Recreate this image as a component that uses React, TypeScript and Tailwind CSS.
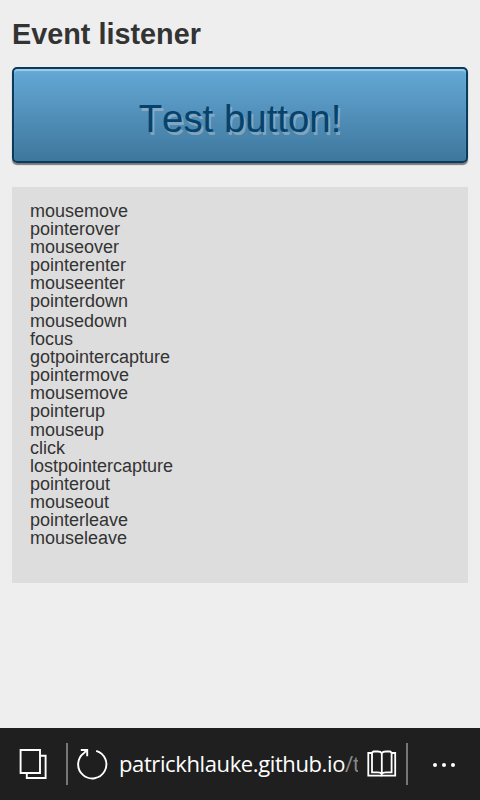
const groups = [
  ['mousemove', 'pointerover', 'mouseover', 'pointerenter', 'mouseenter', 'pointerdown'],
  ['mousedown', 'focus', 'gotpointercapture', 'pointermove', 'mousemove', 'pointerup'],
  ['mouseup', 'click', 'lostpointercapture', 'pointerout', 'mouseout', 'pointerleave', 'mouseleave'],
];

const groupGap = ['', 'mt-[2px]', 'mt-px'];

function PagesIcon() {
  return (
    <svg width="28" height="32" viewBox="0 0 28 32" fill="none" stroke="#fff" strokeWidth="1.9" className="shrink-0 overflow-visible">
      <path d="M0.6 2H20V25H0.6Z" />
      <path d="M20.8 7.7H25.6V30H6.8V25" />
    </svg>
  );
}

function RefreshIcon() {
  return (
    <svg width="32" height="32" viewBox="0 0 32 32" fill="none" stroke="#fff" strokeWidth="1.9" className="shrink-0">
      <path d="M20.2 2.8A14.1 14.1 0 1 1 8 4.9L10.8 2.4" />
      <path d="M4.8 2H11.2V8.3" />
    </svg>
  );
}

function BookIcon() {
  return (
    <svg width="30" height="28" viewBox="0 0 30 28" fill="none" stroke="#fff" strokeWidth="1.8" className="shrink-0">
      <path d="M5 3H1.3V25.6H28.2V3H24.6" />
      <path d="M14.8 24C13.8 22.3 12 22.4 10.4 22.4H5V2.7L6.5 1.5H10.8C12.8 1.5 14 1.9 14.8 3.3C15.6 1.9 16.8 1.5 18.8 1.5H23.1L24.6 2.7V22.4H19.2C17.6 22.4 15.8 22.3 14.8 24V3.3" />
    </svg>
  );
}

export default function App() {
  return (
    <div className="flex h-[800px] w-[480px] flex-col overflow-hidden bg-[#eeeeee] font-['Liberation_Sans',Arial,sans-serif] text-[#333333]">
      <main className="flex-1 px-3 pt-[17px]">
        <h1 className="h-[50px] text-[28.8px] leading-[34px] font-bold">Event listener</h1>
        <button className="block h-24 w-full rounded-[5px] border-2 border-[#083b5c] bg-linear-to-b from-[#65a9d7] to-[#3e779d] pt-[7px] text-center text-[38.4px] leading-[44px] text-[#06426c] shadow-[inset_0_2px_1px_rgba(255,255,255,0.4),0_2px_1px_rgba(0,0,0,0.5)] [font-kerning:none] [text-shadow:2px_3px_0_rgba(204,204,204,0.45)]">
          Test button!
        </button>
        <section className="mt-6 h-[396px] bg-[#dddddd] px-[18px] pt-[15px] text-lg leading-[18px]">
          {groups.map((events, g) => (
            <ul key={g} className={groupGap[g]}>
              {events.map((name) => (
                <li key={name}>{name}</li>
              ))}
            </ul>
          ))}
        </section>
      </main>
      <footer className="flex h-[72px] shrink-0 items-center bg-[#1f1f1f] pl-5 text-white">
        <PagesIcon />
        <span className="ml-[18px] h-[42px] w-[2px] shrink-0 bg-[#777777]" />
        <div className="ml-2 flex">
          <RefreshIcon />
        </div>
        <div className="ml-[11px] w-[239px] shrink-0 overflow-hidden pb-[2px] font-['Open_Sans',sans-serif] text-[22px] leading-8 tracking-[-0.39px] whitespace-nowrap">
          patrickhlauke.github.io<span className="text-[#888888]">/t</span>
        </div>
        <div className="ml-[9px] flex">
          <BookIcon />
        </div>
        <span className="ml-[9px] h-[42px] w-[2px] shrink-0 bg-[#777777]" />
        <div className="ml-[25px] flex gap-[5px] pt-[2px]">
          <span className="size-1 rounded-full bg-white" />
          <span className="size-1 rounded-full bg-white" />
          <span className="size-1 rounded-full bg-white" />
        </div>
      </footer>
    </div>
  );
}
